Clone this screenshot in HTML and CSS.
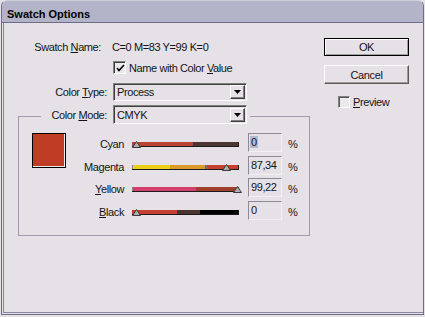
FILE: index.html
```html
<!DOCTYPE html>
<html>
<head>
<meta charset="utf-8">
<link rel="stylesheet" href="styles.css">
</head>
<body>
<div class="window">
  <div class="titlebar">Swatch Options</div>
  <div class="content">
    <div class="main">
      <div class="row name-row">
        <span class="label">Swatch <u>N</u>ame:</span>
        <span class="value">C=0 M=83 Y=99 K=0</span>
      </div>
      <div class="row check-row">
        <span class="check"><svg width="9" height="9" viewBox="0 0 9 9"><path d="M1 4 L3 6.5 L8 1" fill="none" stroke="#000" stroke-width="1.6"/></svg></span>
        <span>Name with Color <u>V</u>alue</span>
      </div>
      <div class="row type-row">
        <span class="label">Color <u>T</u>ype:</span>
        <div class="select"><span class="sel-text">Process</span><span class="drop"><svg width="7" height="4" viewBox="0 0 7 4"><path d="M0 0 H7 L3.5 4 Z" fill="#000"/></svg></span></div>
      </div>
      <fieldset class="group">
        <legend class="legend">
          <div class="legend-inner">
            <span class="label mode-label">Color <u>M</u>ode:</span>
            <div class="select"><span class="sel-text">CMYK</span><span class="drop"><svg width="7" height="4" viewBox="0 0 7 4"><path d="M0 0 H7 L3.5 4 Z" fill="#000"/></svg></span></div>
          </div>
        </legend>
        <div class="mix">
          <div class="swatch"></div>
          <div class="sliders">
            <span class="ch-label">Cyan</span>
            <div class="bar cyan"><span class="thumb" style="left:0px"><svg width="9" height="7" viewBox="0 0 9 7"><path d="M4.5 0.5 L8.5 6.5 H0.5 Z" fill="#b0aeb0" stroke="#3a3a3a"/></svg></span></div>
            <div class="field"><span class="selected">0</span></div>
            <span class="pct">%</span>

            <span class="ch-label">Magenta</span>
            <div class="bar magenta"><span class="thumb" style="left:90px"><svg width="9" height="7" viewBox="0 0 9 7"><path d="M4.5 0.5 L8.5 6.5 H0.5 Z" fill="#b0aeb0" stroke="#3a3a3a"/></svg></span></div>
            <div class="field">87,34</div>
            <span class="pct">%</span>

            <span class="ch-label"><u>Y</u>ellow</span>
            <div class="bar yellow"><span class="thumb" style="left:101px"><svg width="9" height="7" viewBox="0 0 9 7"><path d="M4.5 0.5 L8.5 6.5 H0.5 Z" fill="#b0aeb0" stroke="#3a3a3a"/></svg></span></div>
            <div class="field">99,22</div>
            <span class="pct">%</span>

            <span class="ch-label"><u>B</u>lack</span>
            <div class="bar black"><span class="thumb" style="left:0px"><svg width="9" height="7" viewBox="0 0 9 7"><path d="M4.5 0.5 L8.5 6.5 H0.5 Z" fill="#b0aeb0" stroke="#3a3a3a"/></svg></span></div>
            <div class="field">0</div>
            <span class="pct">%</span>
          </div>
        </div>
      </fieldset>
    </div>
    <div class="side">
      <div class="btn default">OK</div>
      <div class="btn">Cancel</div>
      <div class="preview">
        <span class="check empty"></span>
        <span><u>P</u>review</span>
      </div>
    </div>
  </div>
</div>
</body>
</html>
```
FILE: styles.css
```css
* { box-sizing: border-box; }
html, body {
  margin: 0;
  padding: 0;
  background: #e6e1e6;
}
body {
  font-family: "Liberation Sans", Arial, sans-serif;
  font-size: 11px;
  letter-spacing: -0.4px;
  color: #141414;
}
.window {
  width: 423px;
  height: 315px;
  margin-left: 1px;
  background: #e6e1e6;
  border: 1px solid #6f6d88;
  border-top-color: #cfcfdc;
  border-radius: 6px 6px 0 0;
  display: flex;
  flex-direction: column;
}
.titlebar {
  height: 22px;
  background: #b4b4c9;
  border-bottom: 1px solid #6e6c86;
  border-radius: 5px 5px 0 0;
  font-weight: bold;
  letter-spacing: 0;
  line-height: 13px;
  padding: 7px 0 0 5px;
  color: #000;
}
.content {
  flex: 1;
  display: flex;
  margin: 0 0 1px 1px;
  border-left: 1px solid #8a88a0;
  border-bottom: 1px solid #8a88a0;
}
.main {
  width: 306px;
  padding-top: 17px;
  display: flex;
  flex-direction: column;
}
.row {
  display: flex;
  align-items: center;
}
.label {
  width: 103px;
  margin-right: 6px;
  text-align: right;
  white-space: nowrap;
}
.name-row {
  height: 14px;
}
.name-row .label {
  width: 97px;
  margin-right: 11px;
}
.check-row {
  margin-top: 7px;
  padding-left: 109px;
  height: 13px;
}
.check {
  width: 13px;
  height: 13px;
  flex: none;
  border: 1px solid;
  border-color: #808080 #ffffff #ffffff #808080;
  box-shadow: inset 1px 1px #404040;
  background: #ece9ec;
  display: flex;
  align-items: center;
  justify-content: center;
  margin-right: 3px;
}
.check svg { margin: 1px 0 0 1px; }
.type-row {
  margin-top: 9px;
}
.select {
  width: 134px;
  height: 18px;
  flex: none;
  display: flex;
  align-items: center;
  border: 1px solid;
  border-color: #808080 #ffffff #ffffff #808080;
  box-shadow: inset 1px 1px #404040;
  padding: 1px 1px 1px 3px;
}
.sel-text {
  flex: 1;
}
.drop {
  width: 15px;
  height: 14px;
  border: 1px solid;
  border-color: #ffffff #404040 #404040 #ffffff;
  box-shadow: inset -1px -1px #808080;
  background: #e6e1e6;
  display: flex;
  align-items: center;
  justify-content: center;
}
.group {
  margin: 4px 0 0 14px;
  width: 292px;
  padding: 0 0 12px 13px;
  border: 1px solid #a09eae;
  min-width: 0;
}
.legend {
  margin-left: 9px;
  padding: 0 3px 3px 5px;
}
.legend-inner {
  display: flex;
  align-items: center;
}
.legend .select {
  height: 19px;
}
.mode-label {
  width: 61px;
}
.mix {
  margin-top: 6px;
  display: flex;
  align-items: flex-start;
}
.swatch {
  width: 34px;
  height: 35px;
  background: #c03d25;
  border: 1px solid #000;
  box-shadow: inset -1px -1px #f4eaea;
  flex: none;
}
.sliders {
  display: grid;
  grid-template-columns: 66px 107px 43px auto;
  grid-template-rows: 23px 22px 23px 22px;
  align-items: start;
}
.ch-label {
  text-align: right;
  padding-right: 8px;
  margin-top: 4px;
  line-height: 14px;
  white-space: nowrap;
}
.bar {
  position: relative;
  margin-top: 9px;
  height: 5px;
  border-bottom: 1px solid #1c1c1c;
  border-right: 1px solid #1c1c1c;
}
.bar.cyan {
  background: linear-gradient(to right, #b84332 0, #b84332 58%, #4b3631 58%, #4b3631 100%);
}
.bar.magenta {
  background: linear-gradient(to right, #8a8080 0, #8a8080 1px, #ecd018 1px, #ecd018 35.5%, #d99a2a 35.5%, #d99a2a 69%, #7a6a66 69%, #7a6a66 72%, #c44030 72%, #c44030 100%);
}
.bar.yellow {
  background: linear-gradient(to right, #8a8080 0, #8a8080 1px, #d23e6e 1px, #d23e6e 60%, #a2402f 60%, #a2402f 100%);
}
.bar.black {
  background: linear-gradient(to right, #c44030 0, #c44030 42%, #4a3430 42%, #4a3430 64%, #000 64%, #000 100%);
}
.thumb {
  position: absolute;
  top: -1px;
  width: 9px;
  height: 7px;
  display: block;
}
.thumb svg { display: block; }
.field {
  justify-self: end;
  width: 34px;
  height: 19px;
  border-top: 1px solid #8c8a94;
  border-left: 1px solid #8c8a94;
  border-right: 1px solid #f2f0f2;
  border-bottom: 1px solid #f2f0f2;
  padding-left: 2px;
  line-height: 16px;
}
.selected {
  background: #b4b8d0;
  padding: 0 1px;
  margin-left: -1px;
}
.pct {
  padding-left: 6px;
  margin-top: 4px;
  line-height: 14px;
}
.side {
  padding: 15px 0 0 14px;
  display: flex;
  flex-direction: column;
}
.btn {
  width: 85px;
  height: 18px;
  display: flex;
  align-items: center;
  justify-content: center;
  border: 1px solid;
  border-color: #ffffff #5e5858 #5e5858 #ffffff;
  box-shadow: inset -1px -1px #a29a9a;
}
.btn.default {
  border-color: #000;
  box-shadow: inset 1px 1px #ffffff, inset -1px -1px #a0a0a0;
}
.btn + .btn {
  margin-top: 9px;
  height: 19px;
}
.preview {
  margin-top: 11px;
  padding-left: 14px;
  display: flex;
  align-items: center;
  height: 13px;
}
.check.empty {
  width: 12px;
  height: 12px;
  box-shadow: inset 1px 1px #5a5a5a;
}
```
